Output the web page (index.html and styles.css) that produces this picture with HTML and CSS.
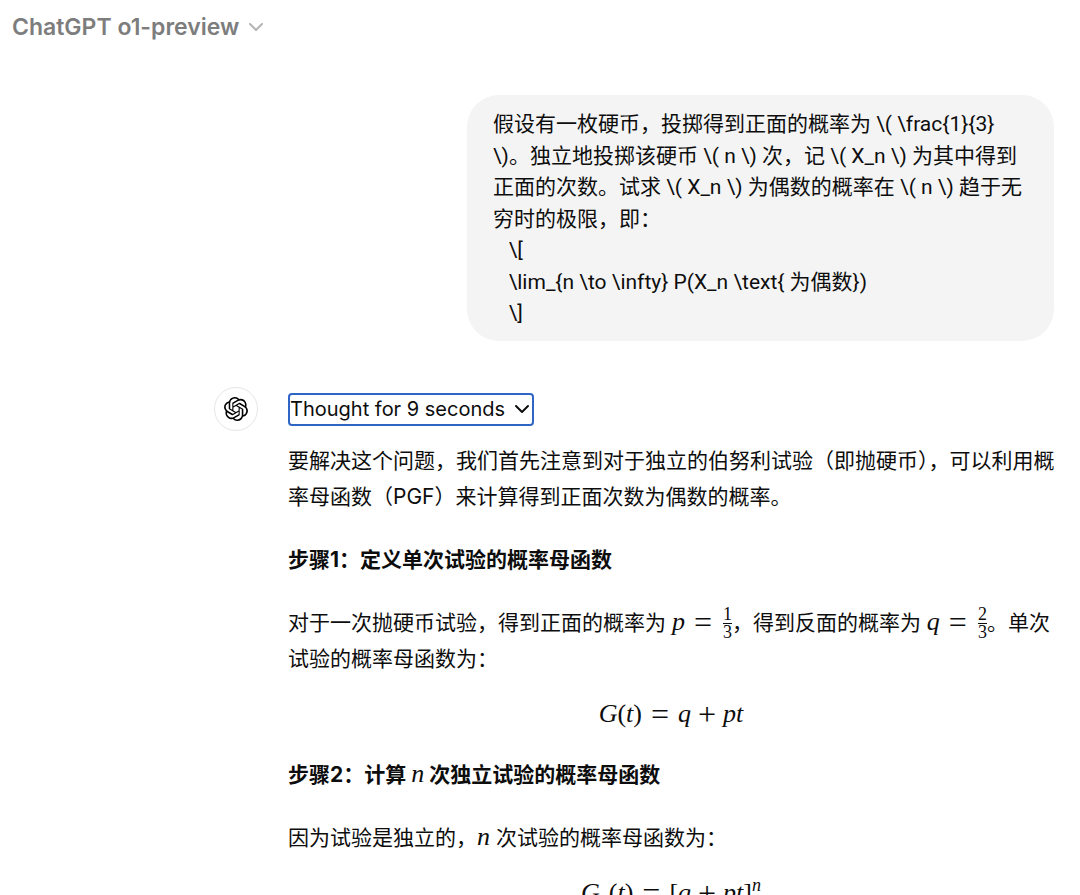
FILE: index.html
```html
<!DOCTYPE html>
<html lang="zh-CN">
<head>
    <meta charset="UTF-8">
    <meta name="viewport" content="width=device-width, initial-scale=1.0">
    <title>ChatGPT</title>
    <link rel="stylesheet" href="styles.css">
</head>
<body>
    <header class="topbar">
        <button class="model-picker" type="button">
            ChatGPT o1-preview
            <svg class="chevron" width="16" height="10" viewBox="0 0 16 10" aria-hidden="true">
                <path d="M2 2l6 6 6-6"/>
            </svg>
        </button>
    </header>

    <main class="chat">
        <div class="column">
            <div class="question">假设有一枚硬币，投掷得到正面的概率为 \( \frac{1}{3}
\)。独立地投掷该硬币 \( n \) 次，记 \( X_n \) 为其中得到
正面的次数。试求 \( X_n \) 为偶数的概率在 \( n \) 趋于无
穷时的极限，即：
   \[
   \lim_{n \to \infty} P(X_n \text{ 为偶数})
   \]</div>

            <div class="reply">
                <div class="avatar">
                    <svg width="24" height="24" viewBox="0 0 24 24" aria-hidden="true">
                        <path d="M22.2819 9.8211a5.9847 5.9847 0 0 0-.5157-4.9108 6.0462 6.0462 0 0 0-6.5098-2.9A6.0651 6.0651 0 0 0 4.9807 4.1818a5.9847 5.9847 0 0 0-3.9977 2.9 6.0462 6.0462 0 0 0 .7427 7.0966 5.98 5.98 0 0 0 .511 4.9107 6.051 6.051 0 0 0 6.5146 2.9001A5.9847 5.9847 0 0 0 13.2599 24a6.0557 6.0557 0 0 0 5.7718-4.2058 5.9894 5.9894 0 0 0 3.9977-2.9001 6.0557 6.0557 0 0 0-.7475-7.0729zm-9.022 12.6081a4.4755 4.4755 0 0 1-2.8764-1.0408l.1419-.0804 4.7783-2.7582a.7948.7948 0 0 0 .3927-.6813v-6.7369l2.02 1.1686a.071.071 0 0 1 .038.052v5.5826a4.504 4.504 0 0 1-4.4945 4.4944zm-9.6607-4.1254a4.4708 4.4708 0 0 1-.5346-3.0137l.142.0852 4.783 2.7582a.7712.7712 0 0 0 .7806 0l5.8428-3.3685v2.3324a.0804.0804 0 0 1-.0332.0615L9.74 19.9502a4.4992 4.4992 0 0 1-6.1408-1.6464zM2.3408 7.8956a4.485 4.485 0 0 1 2.3655-1.9728V11.6a.7664.7664 0 0 0 .3879.6765l5.8144 3.3543-2.0201 1.1685a.0757.0757 0 0 1-.071 0l-4.8303-2.7865A4.504 4.504 0 0 1 2.3408 7.872zm16.5963 3.8558L13.1038 8.364 15.1192 7.2a.0757.0757 0 0 1 .071 0l4.8303 2.7913a4.4944 4.4944 0 0 1-.6765 8.1042v-5.6772a.79.79 0 0 0-.407-.667zm2.0107-3.0231l-.142-.0852-4.7735-2.7818a.7759.7759 0 0 0-.7854 0L9.409 9.2297V6.8974a.0662.0662 0 0 1 .0284-.0615l4.8303-2.7866a4.4992 4.4992 0 0 1 6.6802 4.66zM8.3065 12.863l-2.02-1.1638a.0804.0804 0 0 1-.038-.0567V6.0742a4.4992 4.4992 0 0 1 7.3757-3.4537l-.142.0805L8.704 5.459a.7948.7948 0 0 0-.3927.6813zm1.0976-2.3654l2.602-1.4998 2.6069 1.4998v2.9994l-2.5974 1.4997-2.6067-1.4997Z"/>
                    </svg>
                </div>

                <div class="answer">
                    <button class="thought" type="button">
                        Thought for 9 seconds
                        <svg class="chevron" width="16" height="10" viewBox="0 0 16 10" aria-hidden="true">
                            <path d="M2 2l6 6 6-6"/>
                        </svg>
                    </button>

                    <p>要解决这个问题，我们首先注意到对于独立的伯努利试验（即抛硬币），可以利用概率母函数（PGF）来计算得到正面次数为偶数的概率。</p>

                    <h3>步骤1：定义单次试验的概率母函数</h3>

                    <p>对于一次抛硬币试验，得到正面的概率为 <span class="math"><i>p</i><span class="rel">=</span><span class="frac"><span>1</span><span>3</span></span></span>，得到反面的概率为 <span class="math"><i>q</i><span class="rel">=</span><span class="frac"><span>2</span><span>3</span></span></span>。单次试验的概率母函数为：</p>

                    <div class="math display"><i>G</i>(<i>t</i>)<span class="rel">=</span><i>q</i><span class="bin">+</span><i>pt</i></div>

                    <h3>步骤2：计算 <span class="math"><i>n</i></span> 次独立试验的概率母函数</h3>

                    <p>因为试验是独立的，<span class="math"><i>n</i></span> 次试验的概率母函数为：</p>

                    <div class="math display"><i>G</i><sub><i>n</i></sub>(<i>t</i>)<span class="rel">=</span>[<i>q</i><span class="bin">+</span><i>pt</i>]<sup><i>n</i></sup></div>
                </div>
            </div>
        </div>
    </main>
</body>
</html>
```
FILE: styles.css
```css
* {
    box-sizing: border-box;
}

body {
    display: flex;
    flex-direction: column;
    height: 100vh;
    margin: 0;
    background: #fff;
    color: #0d0d0d;
    font-family: Inter, "Noto Sans CJK SC", sans-serif;
    font-size: 21px;
}

button {
    display: flex;
    align-items: center;
    padding: 0;
    border: none;
    background: none;
    color: inherit;
    font: inherit;
    cursor: pointer;
}

.chevron {
    fill: none;
    stroke: currentColor;
    stroke-width: 2;
    stroke-linecap: round;
    stroke-linejoin: round;
}

.topbar {
    flex: none;
    padding: 12px;
}

.model-picker {
    gap: 9px;
    color: #7d7d7d;
    font-size: 23px;
    font-weight: 600;
    line-height: 30px;
}

.model-picker .chevron {
    color: #b4b4b4;
}

.chat {
    flex: 1;
    min-height: 0;
    padding: 41px 20px 0;
    overflow-y: auto;
    scrollbar-width: none;
}

.column {
    max-width: 846px;
    margin-left: auto;
}

.question {
    width: 70%;
    max-width: 587px;
    margin: 0 6px 0 auto;
    padding: 14px 0 11px 26px;
    border-radius: 32px;
    background: #f4f4f4;
    font-family: Roboto, "Noto Sans CJK SC", sans-serif;
    line-height: 1.5;
    white-space: pre-wrap;
}

.reply {
    display: flex;
    gap: 30px;
    margin-top: 46px;
}

.avatar {
    display: flex;
    flex: none;
    align-items: center;
    justify-content: center;
    width: 44px;
    height: 44px;
    border: 1px solid #e5e5e5;
    border-radius: 50%;
}

.answer {
    flex: 1;
    min-width: 0;
    padding-top: 6px;
    line-height: 36px;
}

.thought {
    gap: 9px;
    height: 33px;
    margin-bottom: 17px;
    padding-right: 2px;
    border: 2px solid #2f66c5;
    border-radius: 4px;
    font-size: 20px;
    line-height: 28px;
}

.answer p {
    margin: 0 0 27px;
}

.answer h3 {
    margin: 0 0 27px;
    font-size: 21px;
    font-weight: 700;
}

/* formulas */
.math {
    font-family: "Liberation Serif", serif;
    font-size: 26px;
    font-weight: 400;
    line-height: 1;
}

.math .rel,
.math .bin {
    font-size: 32px;
    line-height: 0;
    vertical-align: -3px;
}

.math .rel {
    margin: 0 9px;
}

.math .bin {
    margin: 0 7px;
}

.math sub,
.math sup {
    font-size: 18px;
    line-height: 0;
}

.math.display {
    margin: -17px 6px 16px 0;
    line-height: 54px;
    text-align: center;
}

.frac {
    display: inline-flex;
    flex-direction: column;
    margin-left: 2px;
    font-size: 18px;
    line-height: 17px;
    text-align: center;
    vertical-align: middle;
}

.frac span:first-child {
    border-bottom: 1px solid currentColor;
}
```
